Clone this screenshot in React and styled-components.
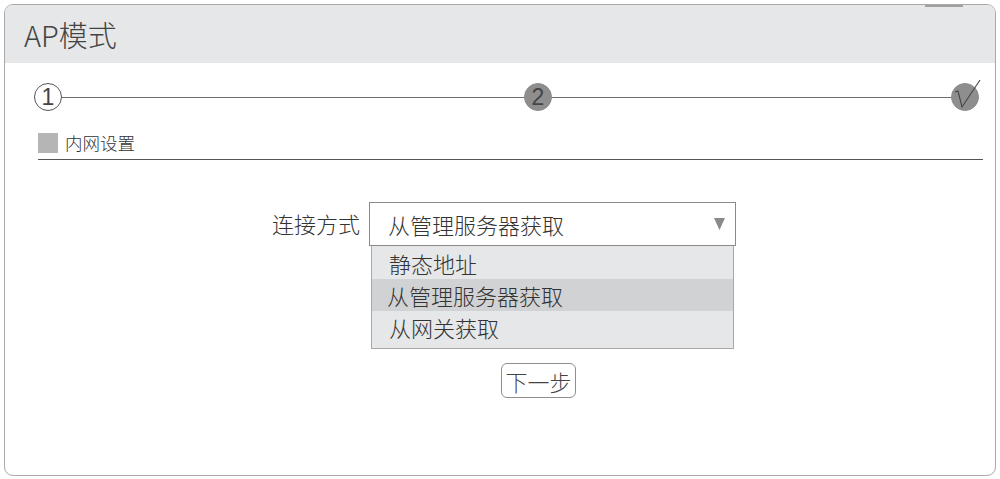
import styled, { createGlobalStyle } from 'styled-components'

const Global = createGlobalStyle`
	html, body { margin: 0; padding: 0; background: #fff; }
	body { font-family: "Noto Sans CJK SC", "Liberation Sans", sans-serif; font-weight: 300; color: #333; }
`

const Panel = styled.div`
	position: relative;
	margin: 4px;
	width: 990px;
	height: 470px;
	border: 1px solid #a9a9a9;
	border-radius: 9px;
	overflow: hidden;
	background: #fff;
`

const TopMark = styled.div`
	position: absolute;
	top: 0;
	right: 32px;
	width: 38px;
	height: 2px;
	background: #a0a0a0;
`

const Header = styled.div`
	height: 58px;
	background: #e6e7e8;
	display: flex;
	align-items: center;
	padding-left: 19px;
	font-size: 29px;
	color: #444;
`

const Steps = styled.div`
	display: flex;
	align-items: center;
	margin: 20px 16px 0 29px;
	height: 28px;
`

const Circle = styled.div`
	position: relative;
	width: 26px;
	height: 26px;
	border-radius: 50%;
	border: 1px solid ${p => p.$done ? '#8c8c8c' : '#555'};
	background: ${p => p.$done ? '#8e8e8e' : '#fff'};
	color: #444;
	font-family: "Liberation Sans", sans-serif;
	font-size: 23px;
	line-height: 27px;
	text-align: center;
	flex: none;
`

const Line = styled.div`
	flex: ${p => p.$grow};
	height: 1px;
	background: #6f6f6f;
`

const CheckMark = styled.svg`
	position: absolute;
	left: 0;
	top: -6px;
	overflow: visible;
`

const Section = styled.div`
	display: flex;
	align-items: center;
	gap: 7px;
	margin: 22px 12px 0 33px;
	padding-bottom: 6px;
	border-bottom: 1px solid #555;
	font-size: 17.5px;
	line-height: 20px;
	color: #333;
`

const Square = styled.div`
	width: 20px;
	height: 20px;
	background: #b5b5b5;
`

const FormRow = styled.div`
	display: flex;
	align-items: flex-start;
	margin-top: 42px;
	padding-left: 264px;
`

const Label = styled.div`
	width: 91px;
	text-align: right;
	font-size: 22px;
	line-height: 42px;
	margin-right: 9px;
	color: #333;
`

const SelectWrap = styled.div`
	position: relative;
	width: 367px;
`

const SelectBox = styled.div`
	height: 42px;
	border: 1px solid #8a8a8a;
	display: flex;
	align-items: center;
	justify-content: space-between;
	padding: 0 10px 0 18px;
	font-size: 22px;
	color: #333;
	background: #fff;
`

const Menu = styled.div`
	margin: 0 2px;
	border: 1px solid #a8a8a8;
	border-top: none;
	background: #e6e7e8;
	padding: 1px 0 5px;
`

const Option = styled.div`
	height: 32px;
	line-height: 32px;
	padding-left: ${p => p.$pad || 17}px;
	font-size: 22px;
	color: #333;
	background: ${p => p.$active ? '#d1d2d4' : 'transparent'};
`

const ButtonRow = styled.div`
	display: flex;
	padding-left: 496px;
	margin-top: 14px;
`

const Button = styled.button`
	height: 35px;
	width: 75px;
	padding: 0;
	border: 1px solid #8e8e8e;
	border-radius: 6px;
	background: #fff;
	font-family: "Noto Sans CJK SC", "Liberation Sans", sans-serif;
	font-weight: 300;
	font-size: 22px;
	color: #444;
`

export default function App() {
	return (
		<>
			<Global />
			<Panel>
				<TopMark />
				<Header>AP模式</Header>
				<Steps>
					<Circle>1</Circle>
					<Line $grow={462} />
					<Circle $done>2</Circle>
					<Line $grow={399} />
					<Circle $done>
						<CheckMark width="28" height="34" viewBox="0 0 28 34">
							<path d="M3 14 L6 13 L10 29 L28 2" fill="none" stroke="#444" strokeWidth="1.1" />
						</CheckMark>
					</Circle>
				</Steps>
				<Section>
					<Square />
					<span>内网设置</span>
				</Section>
				<FormRow>
					<Label>连接方式</Label>
					<SelectWrap>
						<SelectBox>
							<span>从管理服务器获取</span>
							<svg width="11" height="12" viewBox="0 0 11 12">
								<path d="M0 0 H11 L5.5 12 Z" fill="#8a8a8a" />
							</svg>
						</SelectBox>
						<Menu>
							<Option>静态地址</Option>
							<Option $active $pad={15}>从管理服务器获取</Option>
							<Option>从网关获取</Option>
						</Menu>
					</SelectWrap>
				</FormRow>
				<ButtonRow>
					<Button>下一步</Button>
				</ButtonRow>
			</Panel>
		</>
	)
}
